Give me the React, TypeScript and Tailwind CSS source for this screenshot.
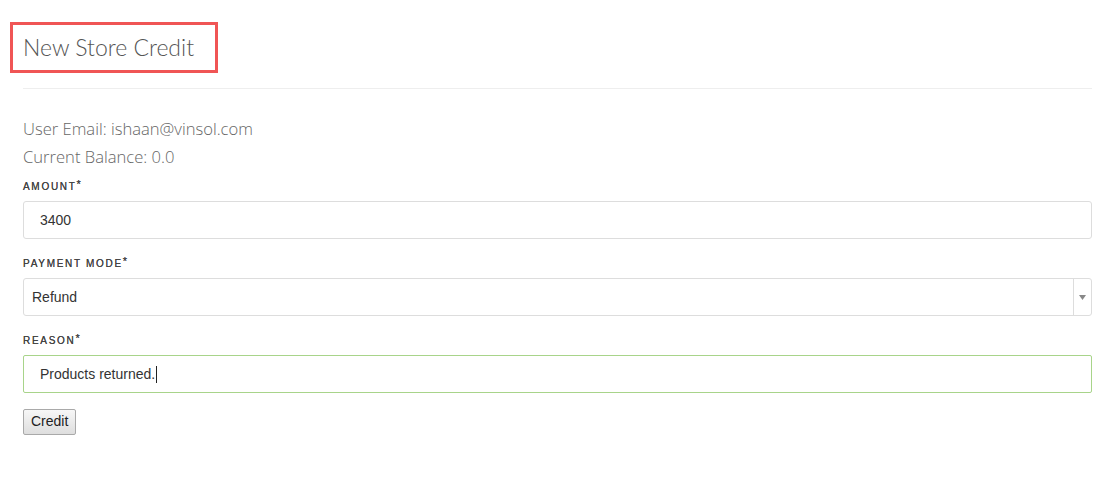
export default function App() {
  return (
    <div className="min-h-screen bg-white px-[23px] font-['Open_Sans',sans-serif]">
      <div className="pt-[22px]">
        <div className="-ml-[13px] h-[51px] w-[208px] border-[3px] border-[#f05555] pl-[10px] pt-[7px]">
          <h1 className="whitespace-nowrap font-['Lato',sans-serif] text-[23px] font-light leading-[31px] text-[#555]">
            New Store Credit
          </h1>
        </div>
      </div>
      <div className="mt-[15px] border-t border-[#eee]" />

      <div className="mt-[26px] text-[16.6px] font-light leading-[28px] text-[#666]">
        <p>User Email: ishaan@vinsol.com</p>
        <p>Current Balance: 0.0</p>
      </div>

      <form className="flex flex-col">
        <label className="mt-[8px] h-[16px] font-['Liberation_Sans',sans-serif] text-[10px] uppercase leading-[16px] tracking-[1.7px] text-[#444] [text-shadow:0_0_0.3px_#444]">
          Amount<span className="relative -top-[2px] text-[11px] leading-none">*</span>
        </label>
        <input
          defaultValue="3400"
          className="mt-[6px] h-[38px] rounded-[3px] border border-[#ddd] px-[16px] font-['Liberation_Sans',sans-serif] text-[14px] text-[#333] outline-none"
        />

        <label className="mt-[17px] h-[16px] font-['Liberation_Sans',sans-serif] text-[10px] uppercase leading-[16px] tracking-[1.7px] text-[#444] [text-shadow:0_0_0.3px_#444]">
          Payment Mode<span className="relative -top-[2px] text-[11px] leading-none">*</span>
        </label>
        <div className="mt-[6px] flex h-[38px] items-stretch rounded-[3px] border border-[#ddd] font-['Liberation_Sans',sans-serif] text-[14px] text-[#333]">
          <div className="flex flex-1 items-center pl-[8px]">Refund</div>
          <div className="flex w-[18px] items-center justify-center border-l border-[#ddd]">
            <svg width="7" height="5" viewBox="0 0 7 5">
              <path d="M0 0h7L3.5 5z" fill="#888" />
            </svg>
          </div>
        </div>

        <label className="mt-[17px] h-[16px] font-['Liberation_Sans',sans-serif] text-[10px] uppercase leading-[16px] tracking-[1.7px] text-[#444] [text-shadow:0_0_0.3px_#444]">
          Reason<span className="relative -top-[2px] text-[11px] leading-none">*</span>
        </label>
        <div className="mt-[6px] flex h-[38px] items-center rounded-[2px] border border-[#a8d48a] px-[16px] font-['Liberation_Sans',sans-serif] text-[14px] text-[#333]">
          Products returned.
          <span className="ml-[1px] inline-block h-[17px] w-px bg-[#222]" />
        </div>

        <div className="mt-[15px]">
          <button
            type="button"
            className="h-[26px] rounded-[2px] border border-[#a9a9a9] bg-gradient-to-b from-[#f7f7f7] to-[#dedede] px-[7px] font-['Liberation_Sans',sans-serif] text-[14px] text-[#222]"
          >
            Credit
          </button>
        </div>
      </form>
    </div>
  );
}
